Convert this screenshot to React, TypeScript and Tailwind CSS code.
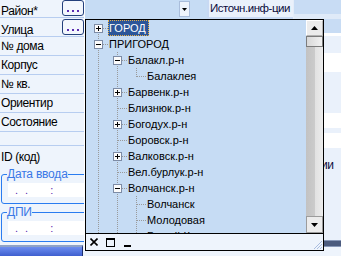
import React from "react";

type Kind = "pipe" | "tee" | "ell" | "first";
type Item = { t: string; lv: number; c: Kind; b?: "+" | "-"; sel?: boolean };

const TREE: Item[] = [
  { t: "ГОРОД", lv: 0, c: "first", b: "+", sel: true },
  { t: "ПРИГОРОД", lv: 0, c: "tee", b: "-" },
  { t: "Балакл.р-н", lv: 1, c: "tee", b: "-" },
  { t: "Балаклея", lv: 2, c: "ell" },
  { t: "Барвенк.р-н", lv: 1, c: "tee", b: "+" },
  { t: "Близнюк.р-н", lv: 1, c: "tee" },
  { t: "Богодух.р-н", lv: 1, c: "tee", b: "+" },
  { t: "Боровск.р-н", lv: 1, c: "tee" },
  { t: "Валковск.р-н", lv: 1, c: "tee", b: "+" },
  { t: "Вел.бурлук.р-н", lv: 1, c: "tee" },
  { t: "Волчанск.р-н", lv: 1, c: "tee", b: "-" },
  { t: "Волчанск", lv: 2, c: "tee" },
  { t: "Молодовая", lv: 2, c: "tee" },
  { t: "Белый Колодезь", lv: 2, c: "tee" },
];

const DOT = "#9a9a9a";

function Conn({ kind, box }: { kind: Kind; box?: "+" | "-" }) {
  const v =
    kind === "pipe" || kind === "tee"
      ? [0, 16]
      : kind === "ell"
      ? [0, 9]
      : [8, 16];
  return (
    <svg width="19" height="16" viewBox="0 0 19 16" className="shrink-0 block" shapeRendering="crispEdges">
      <line x1="9.5" y1={v[0]} x2="9.5" y2={v[1]} stroke={DOT} strokeDasharray="1 1" />
      {kind !== "pipe" && (
        <line x1="10" y1="8.5" x2="19" y2="8.5" stroke={DOT} strokeDasharray="1 1" />
      )}
      {box && (
        <g>
          <rect x="5.5" y="4.5" width="8" height="8" fill="#fbfbfb" stroke="#7d8ca6" />
          <line x1="7" y1="8.5" x2="12" y2="8.5" stroke="#000" />
          {box === "+" && <line x1="9.5" y1="6" x2="9.5" y2="11" stroke="#000" />}
        </g>
      )}
    </svg>
  );
}

function TreeRow({ it }: { it: Item }) {
  const guides = [];
  for (let i = 0; i < it.lv; i++) guides.push(<Conn key={i} kind="pipe" />);
  return (
    <div className="h-[16px] flex items-center">
      {guides}
      <Conn kind={it.c} box={it.b} />
      <span
        className={
          it.sel
            ? "h-[16px] flex items-center border border-dotted border-[#e8b048] bg-[#2c5699] text-white pr-[2px] whitespace-nowrap"
            : "h-[16px] flex items-center border border-transparent text-black whitespace-nowrap"
        }
      >
        {it.t}
      </span>
    </div>
  );
}

function DotsBtn({ className }: { className?: string }) {
  return (
    <div
      className={
        "w-[22px] h-[16px] rounded-[3px] border border-[#24407c] bg-[#f3f7fd] flex items-end justify-center gap-[3px] pb-[3px] shrink-0 " +
        (className || "")
      }
    >
      <span className="w-[2px] h-[2px] bg-[#5a2cb0]" />
      <span className="w-[2px] h-[2px] bg-[#5a2cb0]" />
      <span className="w-[2px] h-[2px] bg-[#5a2cb0]" />
    </div>
  );
}

function Label({ text, h = "h-[19px]", border = true }: { text: string; h?: string; border?: boolean }) {
  return (
    <div
      className={
        h +
        " flex items-center pl-[1px] text-[12px] tracking-[-0.4px] text-black whitespace-nowrap " +
        (border ? "border-b border-[#b7cdf0]" : "")
      }
    >
      {text}
    </div>
  );
}

function DateField() {
  return (
    <div className="h-[14px] bg-white flex items-center text-[11px] leading-none text-[#5a2cb0] mt-[2px] w-[80px]">
      <span className="ml-[7px]">.</span>
      <span className="ml-[7px]">.</span>
      <span className="ml-[22px]">:</span>
    </div>
  );
}

function Group({ title, className }: { title: string; className?: string }) {
  return (
    <fieldset
      className={
        "w-[110px] ml-[1px] border border-[#2a7cf0] rounded-[3px] pl-[6px] pb-[6px] " + (className || "")
      }
    >
      <legend className="-ml-[1px] px-[0px] text-[12px] leading-[14px] text-[#3a78e6] tracking-[-0.2px]">
        {title}
      </legend>
      <DateField />
    </fieldset>
  );
}

function Tri({ up }: { up?: boolean }) {
  return (
    <svg width="7" height="4" viewBox="0 0 7 4">
      {up ? <polygon points="3.5,0 7,4 0,4" fill="#000" /> : <polygon points="0,0 7,0 3.5,4" fill="#000" />}
    </svg>
  );
}

export default function App() {
  return (
    <div className="relative w-[341px] h-[256px] overflow-hidden bg-[#eef4fc] flex font-['Liberation_Sans',Arial,sans-serif]">
      {/* left column */}
      <div className="w-[84px] shrink-0 flex flex-col overflow-hidden">
        <div className="h-[18px] border-b border-[#b7cdf0] flex items-start justify-between pl-[1px] text-[12px] tracking-[-0.4px]">
          <span className="mt-[2px]">Район*</span>
          <DotsBtn />
        </div>
        <div className="h-[19px] border-b border-[#b7cdf0] flex items-start justify-between pl-[1px] text-[12px] tracking-[-0.4px]">
          <span className="mt-[3px]">Улица</span>
          <DotsBtn className="mt-[1px]" />
        </div>
        <Label text="№ дома" />
        <Label text="Корпус" />
        <Label text="№ кв." />
        <Label text="Ориентир" />
        <Label text="Состояние" />
        <Label text="" h="h-[14px]" />
        <Label text="ID (код)" h="h-[21px]" border={false} />
        <Group title="Дата ввода" />
        <Group title="ДПИ" className="mt-[1px]" />
        <div className="mt-[3px] h-[11px] border-t-2 border-[#8ea2c8] bg-gradient-to-b from-[#6d8ef0] to-[#3f5fcf] border-r border-r-[#1d2f70] w-[83px]" />
      </div>

      {/* main area */}
      <div className="flex-1 flex flex-col">
        <div className="h-[19px] flex shrink-0">
          <div className="w-[123px] bg-[#c6dcf4] border-l border-white flex items-start">
            <div className="w-[94px]" />
            <div className="w-[11px] h-[16px] bg-[#eef4fc] border border-[#a9bddb] flex items-center justify-center mt-[1px]">
              <svg width="5" height="3" viewBox="0 0 5 3">
                <polygon points="0,0 5,0 2.5,3" fill="#000" />
              </svg>
            </div>
          </div>
          <div className="w-[2px] bg-[#c7d9f3]" />
          <div className="w-[84px] bg-[#eaf1fb] border-b-2 border-[#c9daf3] flex items-center pl-[1px] text-[11.5px] tracking-[-0.45px] text-[#0c0c3c] whitespace-nowrap overflow-hidden">
            Источн.инф-ции
          </div>
          <div className="flex-1 flex flex-col border-l border-[#e4edf9]">
            <div className="h-[14px] bg-[#c8dcf4]" />
            <div className="flex-1 bg-[#dfeaf8]" />
          </div>
        </div>
        <div className="flex-1 flex">
          <div className="flex-1 flex flex-col">
            <div className="flex-1 bg-[#c6dcf4] border-l border-white" />
            <div className="h-[5px] bg-[#eef4fc]" />
          </div>
          <div className="w-[18px] flex flex-col text-[12px] tracking-[-0.4px] text-[#0c0c3c]">
            <div className="h-[14px] bg-[#c8dcf4]" />
            <div className="h-[3px] bg-white" />
            <div className="h-[17px] bg-[#eaf1fb]" />
            <div className="h-[19px] bg-white" />
            <div className="h-[41px] bg-[#eaf1fb]" />
            <div className="h-[15px] bg-white" />
            <div className="h-[5px] bg-[#eaf1fb]" />
            <div className="h-[15px] bg-white" />
            <div className="h-[92px] bg-[#eaf1fb] pt-[10px] leading-[14px] -ml-[2px] pl-0">ии</div>
            <div className="h-[7px] bg-[#4b5b7e] border-y border-[#8898b8]" />
            <div className="flex-1 bg-[#eef4fc]" />
          </div>
        </div>
      </div>

      {/* dropdown popup */}
      <div className="absolute left-[85px] top-[19px] w-[239px] h-[232px] border border-black bg-[#c6dcf4] flex flex-col text-[11px] leading-none">
        <div className="h-[213px] flex">
          <div className="flex-1 overflow-hidden pl-[3px]">
            {TREE.map((it, i) => (
              <TreeRow key={i} it={it} />
            ))}
          </div>
          <div className="w-[17px] flex flex-col">
            <div className="h-[16px] bg-[#ececec] border border-[#b4b4b4] border-t-white border-l-white flex items-center justify-center">
              <Tri up />
            </div>
            <div className="h-[11px] border border-[#7c7c7c] bg-gradient-to-r from-[#d8d8d8] to-[#f2f2f2]" />
            <div className="flex-1 bg-[linear-gradient(to_right,#c2c2c2_0%,#cbcbcb_50%,#e2e2e2_55%,#ececec_100%)]" />
            <div className="h-[17px] bg-[#ececec] border border-[#9c9c9c] flex items-center justify-center">
              <Tri />
            </div>
          </div>
        </div>
        <div className="flex-1 border-t border-black bg-[#eef4fc] flex items-center pl-[3px]">
          <svg width="8" height="8" viewBox="0 0 8 8" className="ml-[1px]">
            <path d="M0.5 0.5 L7.5 7.5 M7.5 0.5 L0.5 7.5" stroke="#000" strokeWidth="1.6" />
          </svg>
          <svg width="9" height="9" viewBox="0 0 9 9" className="ml-[8px]">
            <rect x="0.5" y="0.5" width="8" height="8" fill="none" stroke="#000" />
            <line x1="0" y1="1.5" x2="9" y2="1.5" stroke="#000" />
          </svg>
          <svg width="7" height="9" viewBox="0 0 7 9" className="ml-[9px]">
            <rect x="0" y="7" width="7" height="2" fill="#000" />
          </svg>
          <div className="flex-1" />
          <svg width="12" height="12" viewBox="0 0 12 12" className="self-end">
            <path d="M11 3 L3 11 M11 6 L6 11 M11 9 L9 11" stroke="#a9bde0" strokeWidth="1" />
          </svg>
        </div>
      </div>
    </div>
  );
}
